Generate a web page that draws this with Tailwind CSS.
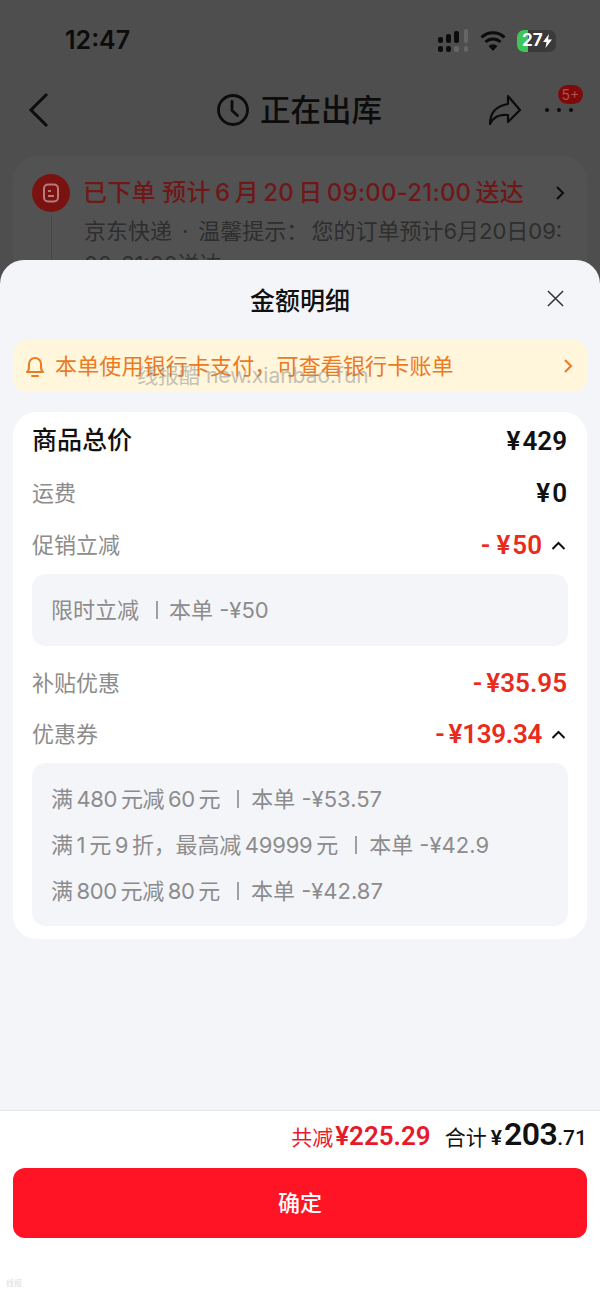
<!DOCTYPE html>
<html lang="zh-CN">
<head>
  <meta charset="UTF-8">
  <meta name="viewport" content="width=device-width, initial-scale=1.0">
  <title>金额明细</title>
  <script src="https://cdn.jsdelivr.net/npm/@tailwindcss/browser@4"></script>
</head>
<body class="font-['Inter','Noto_Sans_CJK_SC',sans-serif]">
  <div class="relative w-[600px] h-[1298px] overflow-hidden bg-[#4e4e4e]">
    <!-- status bar -->
    <div class="flex items-center justify-between h-[80px] pl-[65px] pr-[44px] pt-[1px]">
      <span class="text-[25px] font-semibold text-[#0c0c0c]">12:47</span>
      <div class="flex items-center gap-[11px]">
        <svg class="w-[31px] h-[24px]" viewBox="0 0 31 24">
          <rect x="0" y="8" width="5" height="6" rx="2" fill="#0c0c0c"/>
          <rect x="8" y="5" width="5" height="9" rx="2" fill="#0c0c0c"/>
          <rect x="16" y="2" width="5" height="12" rx="2" fill="#0c0c0c"/>
          <rect x="26" y="0" width="4" height="14" rx="2" fill="#666"/>
          <rect x="0" y="17" width="5" height="6" rx="2" fill="#0c0c0c"/>
          <rect x="8" y="17" width="5" height="6" rx="2" fill="#0c0c0c"/>
          <rect x="16" y="17" width="5" height="6" rx="2" fill="#666"/>
          <rect x="26" y="17" width="4" height="6" rx="2" fill="#666"/>
        </svg>
        <svg class="w-[26px] h-[22px]" viewBox="0 0 26 22" fill="none" stroke="#0c0c0c" stroke-width="3">
          <path d="M1.500 7.500a16.500 16.500 0 0 1 23 0"/>
          <path d="M5.500 12a11 11 0 0 1 15 0"/>
          <path d="M13 21l-4.500-5a6.500 6.500 0 0 1 9 0z" fill="#0c0c0c" stroke="none"/>
        </svg>
        <div class="relative flex items-center w-[39px] h-[22px] rounded-[7px] bg-[#3a3a3a] overflow-hidden">
          <div class="absolute left-0 top-0 bottom-0 w-[11px] bg-[#3fc65a]"></div>
          <span class="relative pl-[5px] text-[17px] leading-none font-bold text-white">27</span>
          <svg class="relative w-[9px] h-[14px]" viewBox="0 0 9 14"><path d="M6 0L0 8h3.500L2.500 14 9 5.500H5z" fill="#fff"/></svg>
        </div>
      </div>
    </div>

    <!-- nav bar -->
    <div class="relative flex items-center justify-center h-[60px] pr-[2px]">
      <svg class="absolute left-[28px] w-[22px] h-[36px]" viewBox="0 0 22 36" fill="none" stroke="#0c0c0c" stroke-width="3"><path d="M19 2L3 18l16 16"/></svg>
      <svg class="w-[34px] h-[34px] mr-[10px]" viewBox="0 0 34 34" fill="none" stroke="#0c0c0c" stroke-width="2.800"><circle cx="17" cy="17" r="14.500"/><path d="M16 8.500v9l5.500 5" stroke-linecap="round"/></svg>
      <span class="text-[30.500px] font-medium text-[#0c0c0c]">正在出库</span>
      <svg class="absolute left-[488px] w-[34px] h-[34px]" viewBox="0 0 34 34" fill="none" stroke="#0c0c0c" stroke-width="2.200" stroke-linejoin="round"><path d="M20 3l12 14-12 12v-7C12 21 5 24 2 31c0-11 6-18 18-20z"/></svg>
      <div class="absolute left-[545px] top-[28px] flex gap-[8px]">
        <span class="w-[4px] h-[4px] rounded-full bg-[#0c0c0c]"></span>
        <span class="w-[4px] h-[4px] rounded-full bg-[#0c0c0c]"></span>
        <span class="w-[4px] h-[4px] rounded-full bg-[#0c0c0c]"></span>
      </div>
      <span class="absolute left-[558px] top-[5px] flex items-center justify-center w-[25px] h-[19px] rounded-full bg-[#7f0a0a] text-[14px] text-[#b05050]">5+</span>
    </div>

    <!-- order card behind the sheet -->
    <div class="mx-[13px] mt-[16px] h-[140px] rounded-t-[24px] bg-[#525252] pl-[19px] pr-[22px] pt-[18px]">
      <div class="flex items-center">
        <div class="flex items-center justify-center w-[38px] h-[38px] rounded-full bg-[#7a1212]">
          <svg class="w-[18px] h-[20px]" viewBox="0 0 18 20" fill="none" stroke="#b87a7a" stroke-width="2"><rect x="2" y="1.500" width="14" height="17" rx="4"/><path d="M6 8h3M6 13h6"/></svg>
        </div>
        <span class="ml-[13px] text-[24px] font-medium tracking-[0.2px] text-[#701818] whitespace-nowrap">已下单 预计&thinsp;6&thinsp;月&thinsp;20&thinsp;日&thinsp;09:00-21:00&thinsp;送达</span>
        <svg class="ml-auto w-[10px] h-[16px]" viewBox="0 0 10 16" fill="none" stroke="#0c0c0c" stroke-width="2"><path d="M2 2l6 6-6 6"/></svg>
      </div>
      <div class="ml-[19px] mt-[3px] border-l border-[#454545] pl-[32px] text-[22px] leading-[33px] text-[#2e2e2e] break-all">京东快递<span class="mx-[10px]">·</span>温馨提示：<span class="ml-[3px]">您的订单预计6月20日09:00-21:00送达</span></div>
    </div>

    <!-- bottom sheet -->
    <div class="absolute left-0 right-0 top-[260px] bottom-0 flex flex-col rounded-t-[24px] bg-[#f4f5f9]">
      <div class="relative flex items-center justify-center h-[80px] pt-[3px]">
        <span class="text-[25px] font-medium text-[#111]">金额明细</span>
        <svg class="absolute right-[36px] top-[30px] w-[17px] h-[17px]" viewBox="0 0 18 18" stroke="#333" stroke-width="1.600"><path d="M1 1l16 16M17 1L1 17"/></svg>
      </div>

      <div class="flex items-center h-[52px] mx-[13px] pl-[12px] pr-[14px] rounded-[14px] bg-[#fff6dc] text-[#ec7a1f]">
        <svg class="w-[20px] h-[24px]" viewBox="0 0 20 24" fill="none" stroke="#ec7a1f" stroke-width="2"><path d="M2 18c2-1 2-3 2-8a6 6 0 0 1 12 0c0 5 0 7 2 8z" stroke-linejoin="round"/><path d="M7 22h6" stroke-linecap="round"/></svg>
        <span class="ml-[10px] pt-[1px] text-[22px] tracking-[0.15px]">本单使用银行卡支付，可查看银行卡账单</span>
        <svg class="ml-auto w-[10px] h-[16px]" viewBox="0 0 10 16" fill="none" stroke="#ec7a1f" stroke-width="2"><path d="M2 2l6 6-6 6"/></svg>
      </div>

      <div class="mx-[13px] mt-[20px] h-[527px] rounded-[24px] bg-white px-[19px] pt-[3px]">
        <div class="flex items-center justify-between h-[52px]">
          <span class="text-[25px] font-medium text-[#111]">商品总价</span>
          <span class="mr-[1px] font-['Roboto'] text-[26px] font-semibold text-[#111]"><span class="mr-[2px]">¥</span>429</span>
        </div>
        <div class="flex items-center justify-between h-[52px]">
          <span class="text-[22px] text-[#8c8c8c]">运费</span>
          <span class="mr-[1px] font-['Roboto'] text-[26px] font-semibold text-[#111]"><span class="mr-[2px]">¥</span>0</span>
        </div>
        <div class="flex items-center justify-between h-[52px]">
          <span class="text-[22px] text-[#8c8c8c]">促销立减</span>
          <div class="flex items-center gap-[9px] mr-[2px]">
            <span class="font-['Roboto'] text-[26px] font-semibold text-[#ea2b1c]"><span class="mr-[6px]">-</span><span class="mr-[2px]">¥</span>50</span>
            <svg class="w-[15px] h-[9px]" viewBox="0 0 15 9" fill="none" stroke="#111" stroke-width="2"><path d="M1.500 8l6-6 6 6"/></svg>
          </div>
        </div>
        <div class="flex items-center h-[72px] mt-[3px] px-[19px] rounded-[14px] bg-[#f4f5f9] text-[22px] text-[#8c8c8c]">
          <span>限时立减</span><span class="w-[2px] h-[18px] ml-[17px] mr-[11px] bg-[#a0a0a0]"></span><span>本单 -¥50</span>
        </div>
        <div class="flex items-center justify-between h-[52px] mt-[11px]">
          <span class="text-[22px] text-[#8c8c8c]">补贴优惠</span>
          <span class="mr-[1px] font-['Roboto'] text-[26px] font-semibold text-[#ea2b1c]"><span class="mr-[4px]">-</span>¥35.95</span>
        </div>
        <div class="flex items-center justify-between h-[50px]">
          <span class="text-[22px] text-[#8c8c8c]">优惠券</span>
          <div class="flex items-center gap-[9px] mr-[2px]">
            <span class="font-['Roboto'] text-[26px] font-semibold tracking-[-0.3px] text-[#ea2b1c]"><span class="mr-[4px]">-</span>¥139.34</span>
            <svg class="w-[15px] h-[9px]" viewBox="0 0 15 9" fill="none" stroke="#111" stroke-width="2"><path d="M1.500 8l6-6 6 6"/></svg>
          </div>
        </div>
        <div class="flex flex-col gap-[16px] h-[163px] mt-[4px] px-[19px] pt-[21px] rounded-[14px] bg-[#f4f5f9] text-[22px] leading-[30px] text-[#8c8c8c]">
          <div class="flex items-center"><span class="tracking-[-0.3px]">满&thinsp;480&thinsp;元减&thinsp;60&thinsp;元</span><span class="w-[2px] h-[18px] ml-[17px] mr-[12px] bg-[#a0a0a0]"></span><span>本单 -¥53.57</span></div>
          <div class="flex items-center"><span class="tracking-[-0.2px]">满&thinsp;1&thinsp;元&thinsp;9&thinsp;折，最高减&thinsp;49999&thinsp;元</span><span class="w-[2px] h-[18px] ml-[17px] mr-[12px] bg-[#a0a0a0]"></span><span>本单 -¥42.9</span></div>
          <div class="flex items-center"><span class="tracking-[-0.3px]">满&thinsp;800&thinsp;元减&thinsp;80&thinsp;元</span><span class="w-[2px] h-[18px] ml-[17px] mr-[12px] bg-[#a0a0a0]"></span><span>本单 -¥42.87</span></div>
        </div>
      </div>

      <!-- footer -->
      <div class="mt-auto h-[188px] border-t border-[#e4e5e9] bg-white px-[13px]">
        <div class="flex items-baseline justify-end h-[57px] pt-[7px] leading-none whitespace-nowrap">
          <span class="text-[21px] text-[#e8192c]">共减</span>
          <span class="ml-[2px] font-['Roboto'] text-[26px] font-semibold text-[#e8192c]">¥225.29</span>
          <span class="ml-[14px] text-[21px] text-[#111]">合计</span>
          <span class="ml-[4px] font-['Roboto'] text-[21px] font-semibold text-[#111]">¥</span>
          <span class="ml-[2px] font-['Roboto'] text-[32px] font-semibold tracking-[-0.5px] text-[#111]">203</span>
          <span class="font-['Roboto'] text-[21px] font-medium text-[#111]">.71</span>
        </div>
        <div class="flex items-center justify-center h-[70px] rounded-[12px] bg-[#ff1426] text-[22px] font-medium text-white">确定</div>
      </div>
    </div>

    <!-- watermarks -->
    <div class="absolute left-[137px] top-[360px] text-[21px] text-[#8a8a8a]/50 whitespace-nowrap">线报酷 new.xianbao.fun</div>
    <div class="absolute left-[6px] top-[1277px] text-[8px] text-[#dcdcdc] whitespace-nowrap">线报</div>
  </div>
</body>
</html>
